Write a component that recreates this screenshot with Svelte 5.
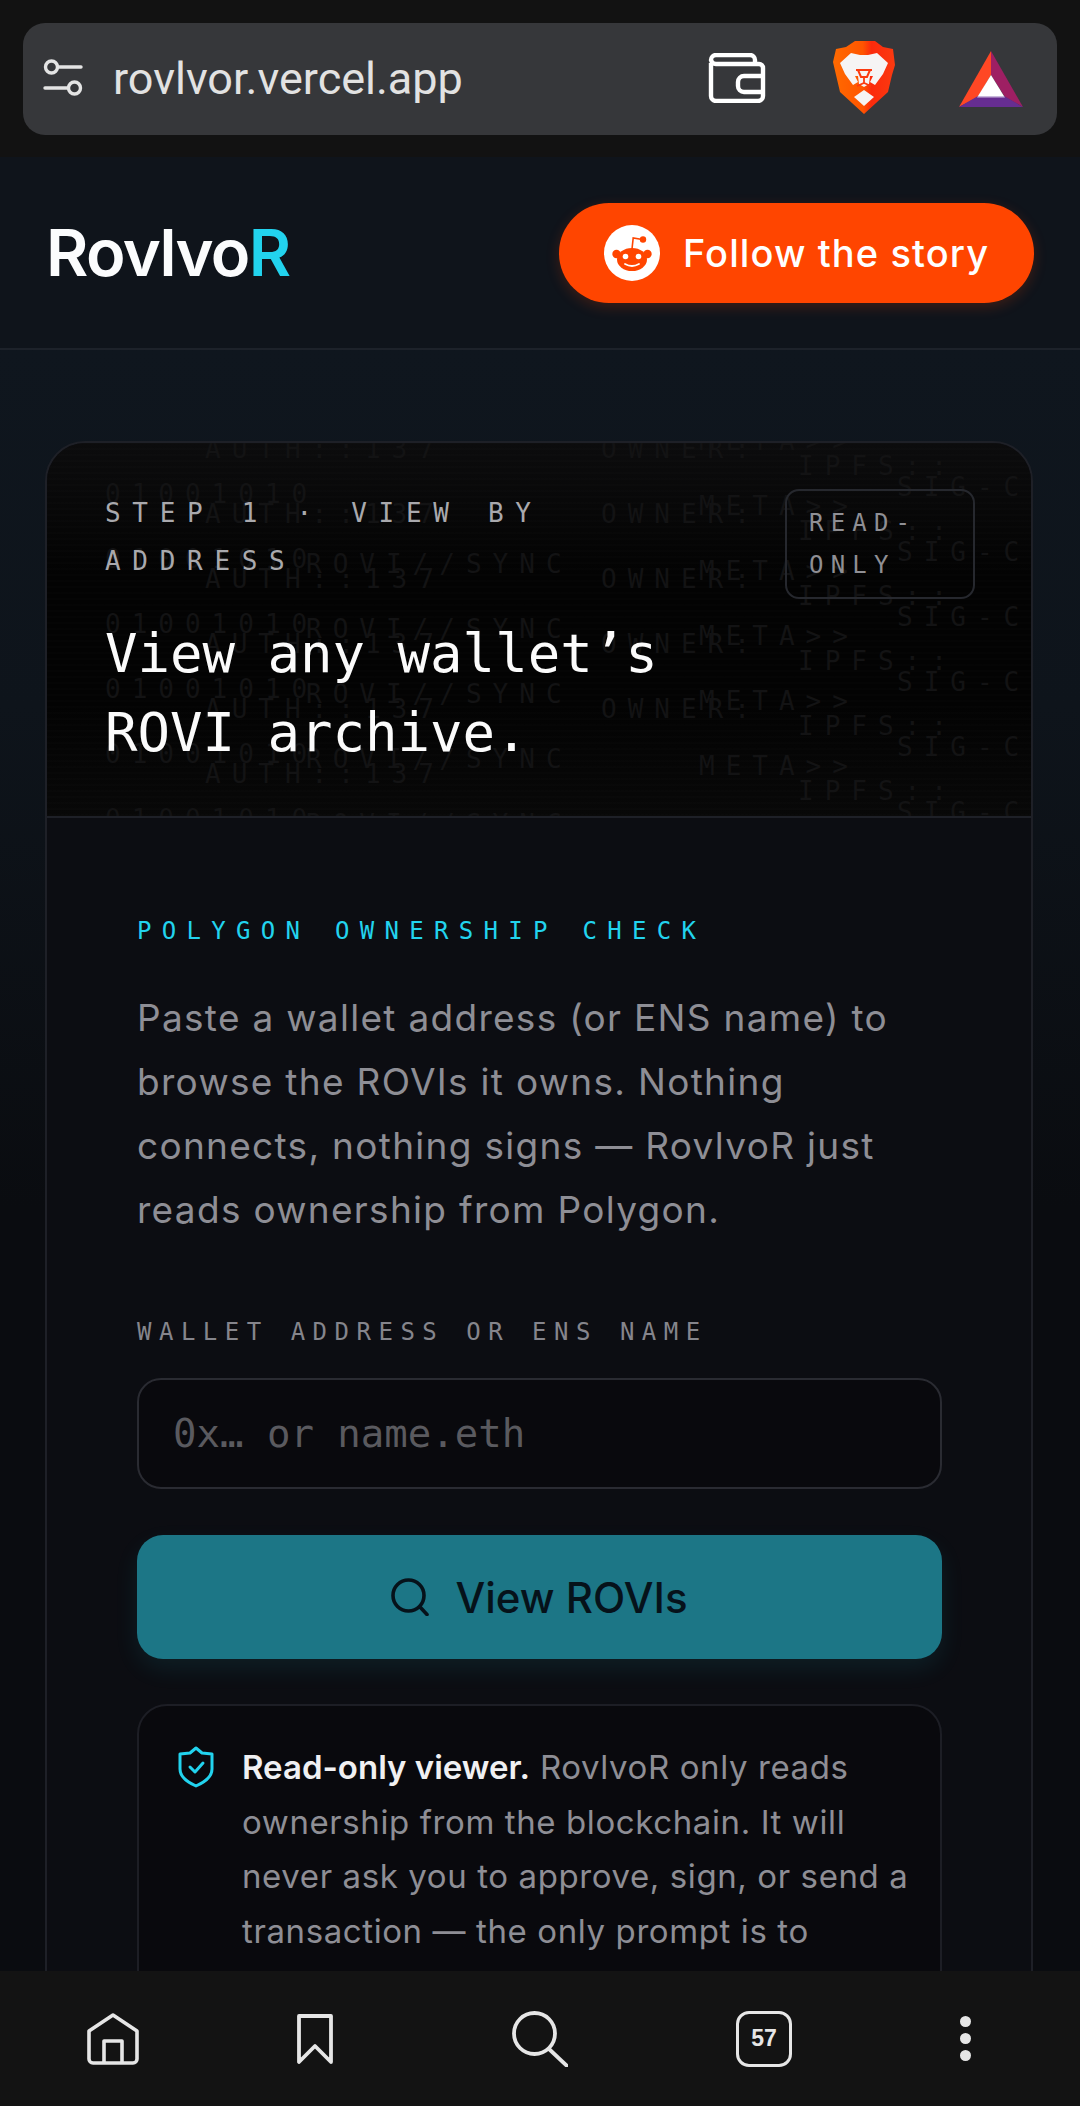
<script>
  // ghost text columns behind the hero, coords relative to the hero box
  const columns = [
    { text: "01001010", x: 58, y: 36, rows: 6 },
    { text: "ROVI//SYNC", x: 259, y: 106, rows: 5 },
    { text: "AUTH::137", x: 158, y: -9, rows: 6 },
    { text: "OWNER:", x: 554, y: -9, rows: 5 },
    { text: "META>>", x: 652, y: -17, rows: 6 },
    { text: "IPFS::", x: 751, y: 8, rows: 6 },
    { text: "SIG-CHAIN", x: 850, y: 29, rows: 6 },
  ];
  const ghosts = columns.flatMap((c) =>
    Array.from({ length: c.rows }, (_, i) => ({ text: c.text, x: c.x, y: c.y + i * 65 })),
  );
</script>

<div class="screen">
  <div class="topbar">
    <div class="urlbar">
      <svg class="tune" viewBox="0 0 40 38" fill="none" stroke="#e4e4e4" stroke-width="3.4" stroke-linecap="round">
        <circle cx="8.5" cy="8" r="6" />
        <path d="M15 8h23" />
        <circle cx="31.5" cy="29" r="6" />
        <path d="M2 29h23" />
      </svg>
      <span class="url">rovlvor.vercel.app</span>
      <svg class="wallet" viewBox="0 0 58 50" fill="none" stroke="#fff" stroke-width="4.4" stroke-linejoin="round">
        <path d="M3 10V43a5 5 0 0 0 5 5H50a5 5 0 0 0 5-5V15a4 4 0 0 0-4-4H8a5 5 0 0 1-5-4 5 5 0 0 1 5-5H42a5 5 0 0 1 5 5v4" />
        <path d="M55 23H36a6 6 0 0 0-6 6v4a6 6 0 0 0 6 6H55" />
      </svg>
      <svg class="brave" viewBox="0 0 62 73">
        <defs>
          <linearGradient id="braveFill" x1="0" x2="1" y1="0" y2="0">
            <stop offset="0" stop-color="#ff6a00" />
            <stop offset="0.48" stop-color="#ff5500" />
            <stop offset="0.62" stop-color="#fb2a0c" />
            <stop offset="1" stop-color="#fb3a10" />
          </linearGradient>
        </defs>
        <path fill="url(#braveFill)" d="M22 0H42L50 6L60 8L62 24L59 34L55 51L31 73L7 51L3 34L0 21L3 8L13 6Z" />
        <path fill="#f6f4f4" d="M18 12L27 14H35L44 12L55 22L50 33L42 44L37 41L40 35H22L25 41L20 44L12 33L7 22Z" />
        <path fill="#f6f4f4" d="M25 35H37L36 43L31 46L26 43Z" />
        <path fill="#f6f4f4" d="M31 49L41 56L31 65L21 56Z" />
        <path d="M23 29H39M25 29L28 36H34L37 29" fill="none" stroke="#fb3a10" stroke-width="2" />
        <path d="M31 36V42M24 45L31 42L38 45" fill="none" stroke="#fb3a10" stroke-width="1.8" />
      </svg>
      <svg class="bat" viewBox="0 0 64 56">
        <path fill="#ff4724" d="M32 0V24L19 46L0 56Z" />
        <path fill="#9e1f63" d="M32 0V24L46 46L64 56Z" />
        <path fill="#662d91" d="M0 56L19 45H45L64 56Z" />
        <path fill="#fff" d="M32 24L45 45H19Z" />
        <path fill="#c9b8dc" d="M19 45H45L46 46.5H18Z" />
      </svg>
    </div>
  </div>

  <main class="page">
    <header class="site-header">
      <div class="logo">Rovlvo<span>R</span></div>
      <button class="follow">
        <svg class="snoo" viewBox="0 0 56 56">
          <circle cx="28" cy="28" r="28" fill="#fff" />
          <g fill="#ff4500">
            <circle cx="12.5" cy="29" r="4.2" />
            <circle cx="43.5" cy="29" r="4.2" />
            <ellipse cx="28" cy="34.5" rx="15" ry="11.5" />
            <circle cx="39" cy="14.5" r="3.2" />
          </g>
          <path d="M28 24l1.2-11 9 1.5" fill="none" stroke="#ff4500" stroke-width="1.6" />
          <circle cx="21.5" cy="31.5" r="2.8" fill="#fff" />
          <circle cx="34.5" cy="31.5" r="2.8" fill="#fff" />
          <path d="M21 39q7 4 14 0" fill="none" stroke="#fff" stroke-width="1.8" stroke-linecap="round" />
        </svg>
        Follow the story
      </button>
    </header>

    <section class="content">
      <article class="card">
        <div class="hero">
          <div class="ghosts" aria-hidden="true">
            {#each ghosts as g}
              <span style="left:{g.x}px;top:{g.y}px">{g.text}</span>
            {/each}
          </div>
          <div class="hero-top">
            <div class="step">STEP 1 · VIEW BY ADDRESS</div>
            <div class="badge">READ-ONLY</div>
          </div>
          <h1>View any wallet’s ROVI archive.</h1>
        </div>

        <div class="body">
          <div class="eyebrow">POLYGON OWNERSHIP CHECK</div>
          <p class="lead">
            Paste a wallet address (or ENS name) to browse the ROVIs it owns. Nothing connects, nothing signs — RovlvoR
            just reads ownership from Polygon.
          </p>

          <label class="field-label" for="addr">WALLET ADDRESS OR ENS NAME</label>
          <input id="addr" class="field" placeholder="0x… or name.eth" />

          <button class="submit">
            <svg viewBox="0 0 38 38" fill="none" stroke="#06121a" stroke-width="3.6" stroke-linecap="round">
              <circle cx="17.5" cy="17.5" r="15.5" />
              <path d="M29 29l7 7.5" />
            </svg>
            View ROVIs
          </button>

          <div class="notice">
            <svg viewBox="0 0 36 42" fill="none" stroke="#22d3ee" stroke-width="3" stroke-linejoin="round" stroke-linecap="round">
              <path d="M18 2L24 7L34 8V23Q34 33 18 40Q2 33 2 23V8L12 7Z" />
              <path d="M12 21l5 5 8-9" stroke-width="3" />
            </svg>
            <p><strong>Read-only viewer.</strong> RovlvoR only reads ownership from the blockchain. It will never ask you to approve, sign, or send a transaction — the only prompt is to</p>
          </div>
        </div>
      </article>
    </section>
  </main>

  <nav class="bottombar">
    <svg class="home" viewBox="0 0 52 52" fill="none" stroke="#e6e6e6" stroke-width="3.6" stroke-linejoin="round">
      <path d="M26 2L50 18V46a4 4 0 0 1-4 4H6a4 4 0 0 1-4-4V18Z" />
      <path d="M17 50V28H35V50" />
    </svg>
    <svg class="mark" viewBox="0 0 36 50" fill="none" stroke="#e6e6e6" stroke-width="3.8" stroke-linejoin="round">
      <path d="M2 2H34V48L18 32L2 48Z" />
    </svg>
    <svg class="find" viewBox="0 0 56 56" fill="none" stroke="#e6e6e6" stroke-width="3.8" stroke-linecap="round">
      <circle cx="22.5" cy="22.5" r="20.5" />
      <path d="M37 38L55 55" />
    </svg>
    <div class="tabs">57</div>
    <div class="dots"><i></i><i></i><i></i></div>
  </nav>
</div>

<style>
  :global(body) {
    background: #0a0c11;
  }
  .screen {
    width: 1080px;
    height: 2106px;
    display: flex;
    flex-direction: column;
    overflow: hidden;
    font-family: Inter, "Noto Sans", sans-serif;
  }

  .topbar {
    height: 157px;
    flex: none;
    background: #121212;
    padding: 23px 23px 0;
    box-sizing: border-box;
  }
  .urlbar {
    height: 112px;
    border-radius: 22px;
    background: #36373a;
    display: flex;
    align-items: center;
    padding: 0 34px 0 20px;
  }
  .tune {
    width: 40px;
    height: 38px;
    margin-top: -3px;
  }
  .url {
    margin-left: 30px;
    font: 400 45px Roboto, sans-serif;
    color: #e2e2e2;
    margin-top: -2px;
  }
  .wallet {
    width: 58px;
    height: 50px;
    margin-left: auto;
    margin-top: -2px;
  }
  .brave {
    width: 62px;
    height: 73px;
    margin-left: 67px;
    margin-top: -3px;
  }
  .bat {
    width: 64px;
    height: 56px;
    margin-left: 64px;
  }

  .page {
    flex: 1;
    min-height: 0;
    overflow: hidden;
    background: linear-gradient(180deg, #0f161e 190px, #0e141b 550px, #0a0c10 1050px);
  }
  .site-header {
    height: 193px;
    box-sizing: border-box;
    background: #0f141b;
    border-bottom: 2px solid #1d222a;
    display: flex;
    align-items: center;
    justify-content: space-between;
    padding: 0 46px;
  }
  .logo {
    font-size: 65px;
    font-weight: 600;
    letter-spacing: -1.6px;
    color: #fbfcfd;
  }
  .logo span {
    color: #22d3ee;
  }
  .follow {
    width: 475px;
    height: 100px;
    border: 0;
    border-radius: 50px;
    background: #ff4500;
    color: #fff;
    display: flex;
    align-items: center;
    gap: 23px;
    padding: 0 0 0 45px;
    font: 500 38px Inter, sans-serif;
    letter-spacing: 1.1px;
    box-shadow: 0 4px 14px rgba(255, 69, 0, 0.2);
  }
  .snoo {
    width: 56px;
    height: 56px;
    flex: none;
  }

  .content {
    padding: 91px 47px 0 45px;
  }
  .card {
    border: 2px solid #1e2027;
    border-radius: 40px;
    overflow: hidden;
    background: #0c0d12;
  }
  .hero {
    position: relative;
    height: 375px;
    box-sizing: border-box;
    padding: 46px 56px 0 58px;
    background: linear-gradient(180deg, #0c0c0d 0%, #030303 35%, #030303 70%, #080808 100%);
    border-bottom: 2px solid #1e2027;
    overflow: hidden;
  }
  .ghosts {
    position: absolute;
    inset: 0;
    background: repeating-linear-gradient(0deg, rgba(255, 255, 255, 0.006) 0 2px, transparent 2px 6px);
  }
  .ghosts span {
    position: absolute;
    font: 400 26px/30px "DejaVu Sans Mono", monospace;
    letter-spacing: 11px;
    color: #131314;
    white-space: nowrap;
  }
  .hero-top {
    position: relative;
    display: flex;
    justify-content: space-between;
    align-items: flex-start;
  }
  .step {
    width: 480px;
    font: 400 26px/48px "DejaVu Sans Mono", monospace;
    letter-spacing: 11.7px;
    color: #a9a9ad;
  }
  .badge {
    width: 190px;
    height: 110px;
    box-sizing: border-box;
    border: 2px solid #26282e;
    border-radius: 14px;
    padding: 11px 22px;
    font: 400 24px/42px "DejaVu Sans Mono", monospace;
    letter-spacing: 7.2px;
    color: #8f8f94;
    overflow-wrap: anywhere;
  }
  h1 {
    position: relative;
    margin: 0;
    width: 640px;
    margin-top: 15px;
    font: 400 54px/79px "DejaVu Sans Mono", monospace;
    color: #fbfbfb;
  }

  .body {
    padding: 98px 89px 60px 90px;
  }
  .eyebrow {
    font: 400 24px/30px "DejaVu Sans Mono", monospace;
    letter-spacing: 10.3px;
    color: #22d3ee;
  }
  .lead {
    margin: 40px 0 0;
    font-size: 37px;
    line-height: 64px;
    letter-spacing: 1.3px;
    color: #8e8e95;
  }
  .field-label {
    display: block;
    margin-top: 75px;
    font: 400 24px/30px "DejaVu Sans Mono", monospace;
    letter-spacing: 7.5px;
    color: #85858c;
  }
  .field {
    display: block;
    width: 100%;
    height: 111px;
    margin-top: 31px;
    box-sizing: border-box;
    padding: 0 34px;
    border: 2px solid #2a2b32;
    border-radius: 24px;
    background: #09090d;
    font: 400 39px "DejaVu Sans Mono", monospace;
    color: #ddd;
  }
  .field::placeholder {
    color: #5a5a5f;
    opacity: 1;
  }
  .submit {
    width: 100%;
    height: 124px;
    margin-top: 46px;
    border: 0;
    border-radius: 26px;
    background: #1c7686;
    color: #06121a;
    display: flex;
    align-items: center;
    justify-content: center;
    gap: 26px;
    font: 500 42px Inter, sans-serif;
    box-shadow: 0 10px 24px rgba(34, 211, 238, 0.09);
  }
  .submit svg {
    width: 38px;
    height: 38px;
    flex: none;
  }
  .notice {
    margin-top: 45px;
    display: flex;
    gap: 28px;
    padding: 34px 10px 100px 39px;
    border: 2px solid #1d1e25;
    border-radius: 30px;
    background: #09090d;
  }
  .notice svg {
    width: 36px;
    height: 42px;
    flex: none;
    margin-top: 6px;
  }
  .notice p {
    margin: 0;
    font-size: 33px;
    line-height: 54.6px;
    letter-spacing: 0.6px;
    color: #8e8e95;
  }
  .notice strong {
    color: #f0f0f2;
    font-weight: 600;
    letter-spacing: 0;
  }

  .bottombar {
    height: 135px;
    flex: none;
    background: #131313;
    display: flex;
    align-items: center;
    padding-left: 87px;
  }
  .home {
    width: 52px;
    height: 52px;
  }
  .mark {
    width: 36px;
    height: 50px;
    margin-left: 158px;
  }
  .find {
    width: 56px;
    height: 56px;
    margin-left: 179px;
  }
  .tabs {
    width: 56px;
    height: 56px;
    box-sizing: border-box;
    margin-left: 168px;
    border: 3.6px solid #e6e6e6;
    border-radius: 13px;
    color: #e6e6e6;
    display: flex;
    align-items: center;
    justify-content: center;
    font: 700 23px "Liberation Sans", sans-serif;
  }
  .dots {
    margin-left: 168px;
    display: flex;
    flex-direction: column;
    gap: 6px;
  }
  .dots i {
    display: block;
    width: 11px;
    height: 11px;
    border-radius: 50%;
    background: #e6e6e6;
  }
</style>
